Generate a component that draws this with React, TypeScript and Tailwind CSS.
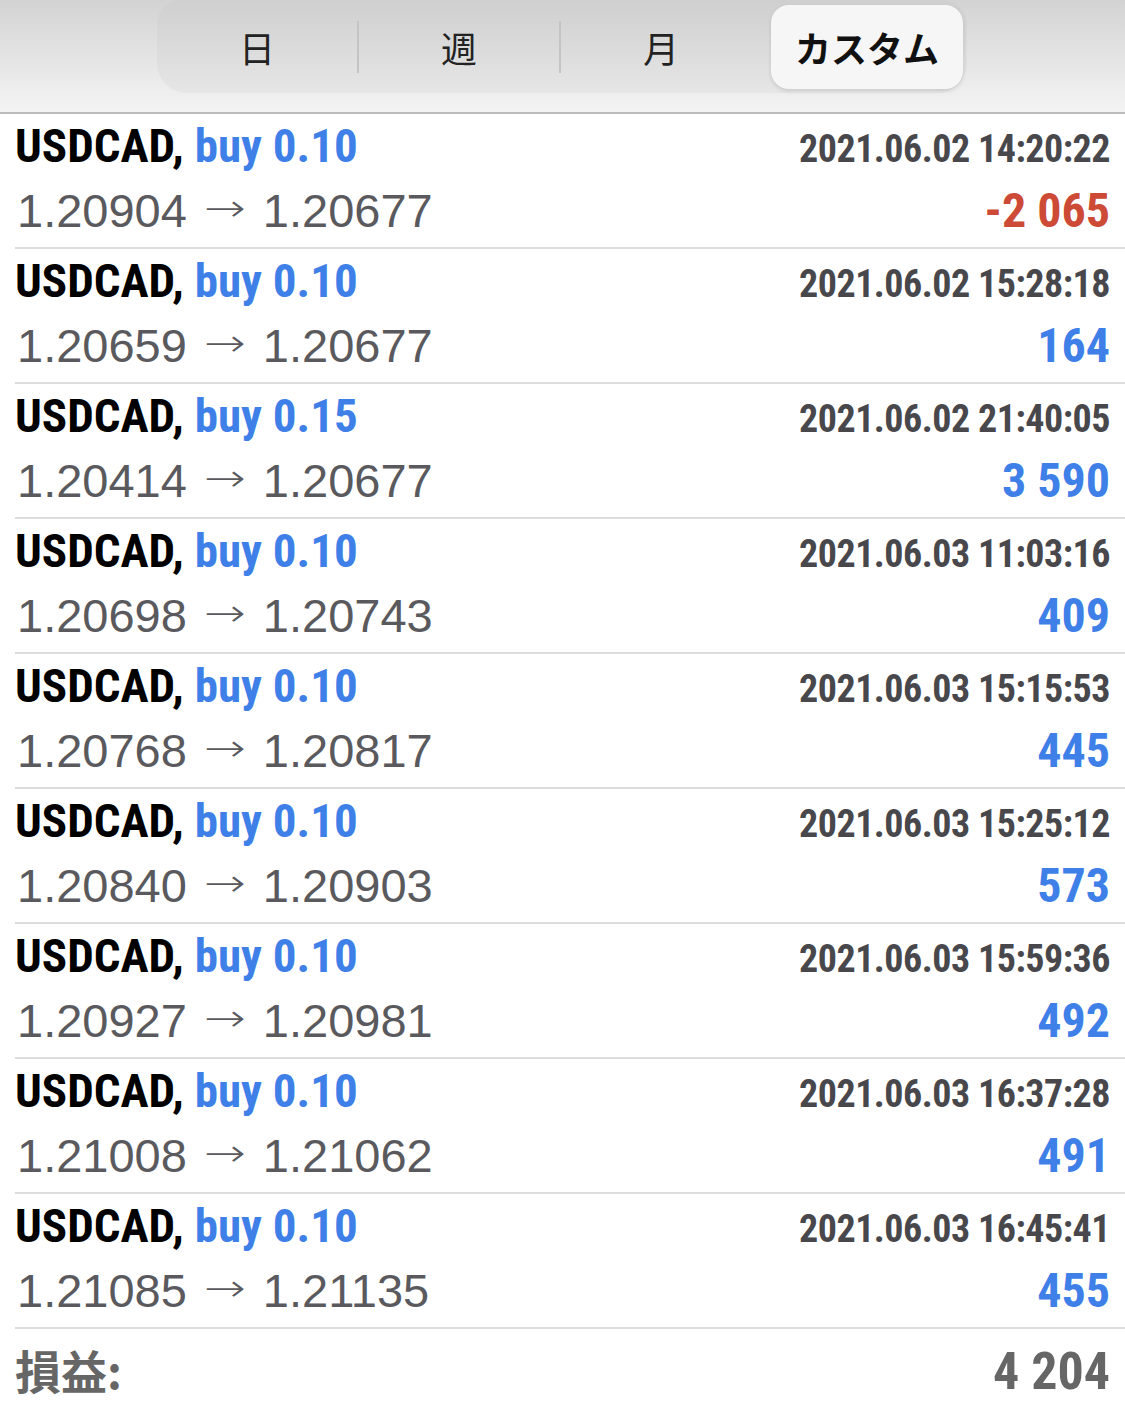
const trades = [
  { lots: "0.10", time: "2021.06.02 14:20:22", open: "1.20904", close: "1.20677", profit: "-2 065" },
  { lots: "0.10", time: "2021.06.02 15:28:18", open: "1.20659", close: "1.20677", profit: "164" },
  { lots: "0.15", time: "2021.06.02 21:40:05", open: "1.20414", close: "1.20677", profit: "3 590" },
  { lots: "0.10", time: "2021.06.03 11:03:16", open: "1.20698", close: "1.20743", profit: "409" },
  { lots: "0.10", time: "2021.06.03 15:15:53", open: "1.20768", close: "1.20817", profit: "445" },
  { lots: "0.10", time: "2021.06.03 15:25:12", open: "1.20840", close: "1.20903", profit: "573" },
  { lots: "0.10", time: "2021.06.03 15:59:36", open: "1.20927", close: "1.20981", profit: "492" },
  { lots: "0.10", time: "2021.06.03 16:37:28", open: "1.21008", close: "1.21062", profit: "491" },
  { lots: "0.10", time: "2021.06.03 16:45:41", open: "1.21085", close: "1.21135", profit: "455" },
];

const condensed = "font-['Liberation_Sans_Narrow','Roboto_Condensed',Roboto,sans-serif]";

function Segment({ label, active }: { label: string; active?: boolean }) {
  if (active) {
    return (
      <div className="w-[192px] ml-[10px] flex items-center justify-center h-[84px] rounded-[18px] bg-[#f6f6f6] shadow-[0_2px_4px_rgba(0,0,0,0.12)] text-[36px] font-bold text-[#111]">
        {label}
      </div>
    );
  }
  return <div className="w-[200px] flex items-center justify-center h-[84px] text-[36px] text-[#222]">{label}</div>;
}

function TradeRow({ t }: { t: (typeof trades)[number] }) {
  const loss = t.profit.startsWith("-");
  return (
    <div className="ml-[15px] pr-[15px] pt-px h-[135px] border-b-2 border-[#dcdcdc]">
      <div className="flex items-baseline justify-between leading-[62px]">
        <div className={`${condensed} font-bold text-[47px]`}>
          <span className="text-black">USDCAD,</span> <span className="text-[#3f7fe8]">buy {t.lots}</span>
        </div>
        <div className={`${condensed} font-bold text-[38px] tracking-[-0.5px] text-[#48484c]`}>{t.time}</div>
      </div>
      <div className="flex items-baseline justify-between leading-[60px]">
        <div className="font-['Liberation_Sans',Arial,sans-serif] text-[47px] text-[#5a5a5e] pl-[2px]">
          {t.open}
          <span className="inline-block mx-[17px] font-['DejaVu_Sans',sans-serif] font-extralight text-[50px] relative -top-[2px] scale-y-75">→</span>
          {t.close}
        </div>
        <div className={`${condensed} font-bold text-[48px] ${loss ? "text-[#cc4a36]" : "text-[#3f7fe8]"}`}>
          {t.profit}
        </div>
      </div>
    </div>
  );
}

export default function App() {
  return (
    <div className="w-[1125px] h-[1411px] overflow-hidden bg-white">
      <div className="h-[114px] border-b-2 border-[#bcbcbc] bg-gradient-to-b from-[#d3d3d3] to-[#f4f4f4] flex justify-start">
        <div className="ml-[157px] w-[810px] h-[93px] rounded-b-[30px] rounded-t-[24px] bg-gradient-to-b from-[#cfcfcf] to-[#e6e6e6] flex items-center font-['Noto_Sans_CJK_JP',sans-serif]">
          <Segment label="日" />
          <div className="w-[2px] h-[52px] bg-[#c4c4c4]" />
          <Segment label="週" />
          <div className="w-[2px] h-[52px] bg-[#c4c4c4]" />
          <Segment label="月" />
          <Segment label="カスタム" active />
        </div>
      </div>
      {trades.map((t, i) => (
        <TradeRow key={i} t={t} />
      ))}
      <div className="ml-[15px] pr-[15px] flex items-baseline justify-between leading-[80px]">
        <div className="font-['Noto_Sans_CJK_JP',sans-serif] font-bold text-[46px] text-[#666]">損益:</div>
        <div className={`${condensed} font-bold text-[52px] text-[#666]`}>4 204</div>
      </div>
    </div>
  );
}
